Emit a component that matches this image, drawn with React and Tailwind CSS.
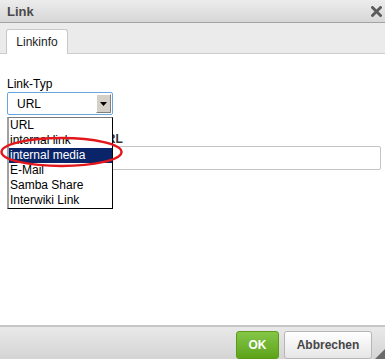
import { useState } from 'react';

const options = ['URL', 'internal link', 'internal media', 'E-Mail', 'Samba Share', 'Interwiki Link'];

export default function App() {
  const [selected] = useState(2);

  return (
    <div className="relative w-[385px] h-[359px] flex flex-col overflow-hidden bg-white font-['Liberation_Sans',Arial,sans-serif] text-black">
      {/* Title bar */}
      <div className="h-[23px] shrink-0 flex items-center justify-between pl-[7px] pr-[2px] border-b border-[#a3a3a3] bg-gradient-to-b from-[#ececec] to-[#d7d7d7]">
        <span className="text-[13px] font-bold text-[#4a4a4a] leading-none">Link</span>
        <svg width="11" height="11" viewBox="0 0 11 11" className="mr-[1px]">
          <path d="M1.5 1.5 L9.5 9.5 M9.5 1.5 L1.5 9.5" stroke="#5a5a5a" strokeWidth="2.8" strokeLinecap="square" />
        </svg>
      </div>

      {/* Tabs */}
      <div className="h-[31px] shrink-0 flex items-end px-[6px] bg-[#ebebeb] border-b border-[#cdcdcd]">
        <div className="h-[25px] w-[62px] -mb-[1px] flex items-center justify-center bg-white border border-b-0 border-[#c8c8c8] rounded-t-[3px] text-[12px] text-[#222]">
          Linkinfo
        </div>
      </div>

      {/* Content */}
      <div className="relative flex-1 px-[7px] pt-[23px]">
        <div className="text-[12px] leading-[14px]">Link-Typ</div>
        <div className="mt-[1px] w-[106px] h-[23px] flex items-center pl-[9px] pr-[1px] border border-[#6aa6de] rounded-[2px] bg-white">
          <span className="flex-1 text-[12px]">URL</span>
          <div className="w-[15px] h-[19px] flex items-center justify-center bg-[#d4d0c8] border border-t-white border-l-white border-b-[#808080] border-r-[#808080]">
            <svg width="7" height="4" viewBox="0 0 7 4">
              <polygon points="0,0 7,0 3.5,4" fill="#000" />
            </svg>
          </div>
        </div>

        <div className="mt-[17px] text-[12px] leading-[14px] font-bold tracking-[0.15px] text-[#333]">Interne Medien-URL</div>
        <div className="w-[374px] h-[24px] border border-[#c4c4c4] rounded-[2px] bg-white" />

        {/* Open dropdown list */}
        <div className="absolute left-[7px] top-[63px] w-[106px] bg-white border border-black border-t-[#7a7a7a] border-l-2 border-l-[#a0a0a0]">
          {options.map((o, i) => (
            <div
              key={o}
              className={
                i === selected
                  ? 'h-[15px] leading-[15px] pl-[1px] text-[12px] bg-[#0a246a] text-white'
                  : 'h-[15px] leading-[15px] pl-[1px] text-[12px]'
              }
            >
              {o}
            </div>
          ))}
        </div>

        {/* Red highlight ellipse */}
        <svg className="absolute left-0 top-[82px]" width="126" height="34" viewBox="0 0 126 34">
          <ellipse cx="61.5" cy="16" rx="60" ry="14" fill="none" stroke="#e3161b" strokeWidth="2.4" />
        </svg>
      </div>

      {/* Footer */}
      <div className="h-[34px] shrink-0 flex justify-end items-start gap-[5px] pt-[4px] pr-[13px] border-t-2 border-[#c6c6c6] bg-gradient-to-b from-[#e9e9e9] to-[#d4d4d4]">
        <button className="w-[43px] h-[28px] rounded-[3px] border border-[#5c9a1c] bg-gradient-to-b from-[#85c647] to-[#5da317] text-white text-[12px] font-bold">
          OK
        </button>
        <button className="w-[88px] h-[28px] rounded-[3px] border border-[#b6b6b6] bg-gradient-to-b from-white to-[#e6e6e6] text-[#474747] text-[12px] font-bold">
          Abbrechen
        </button>
      </div>

      {/* Resize grip */}
      <svg className="absolute right-0 bottom-0" width="10" height="10" viewBox="0 0 10 10">
        <polygon points="10,0 10,10 0,10" fill="#6a6a6a" />
      </svg>
    </div>
  );
}
